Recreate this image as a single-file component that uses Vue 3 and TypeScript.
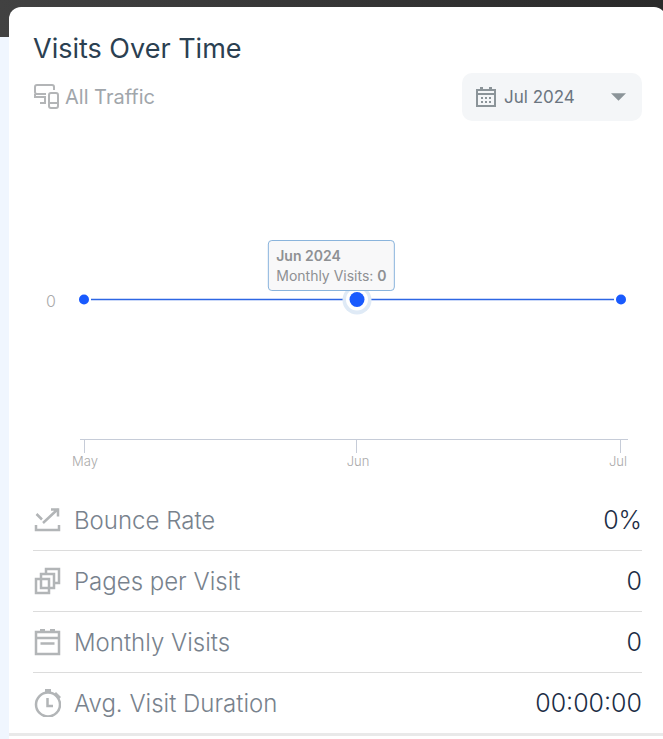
<script setup lang="ts">
import { ref } from 'vue'

interface Point {
  label: string
  tick: number
  labelX: number
}

interface Metric {
  icon: 'bounce' | 'pages' | 'calendar' | 'timer'
  label: string
  value: string
}

const month = ref('Jul 2024')
const months = ['May 2024', 'Jun 2024', 'Jul 2024']

const points: Point[] = [
  { label: 'May', tick: 51, labelX: 52 },
  { label: 'Jun', tick: 323, labelX: 325 },
  { label: 'Jul', tick: 587, labelX: 585 },
]

const metrics: Metric[] = [
  { icon: 'bounce', label: 'Bounce Rate', value: '0%' },
  { icon: 'pages', label: 'Pages per Visit', value: '0' },
  { icon: 'calendar', label: 'Monthly Visits', value: '0' },
  { icon: 'timer', label: 'Avg. Visit Duration', value: '00:00:00' },
]
</script>

<template>
  <div class="page">
    <main class="card">
      <h1 class="title">Visits Over Time</h1>
      <div class="toolbar">
        <div class="traffic">
          <svg class="traffic-icon" viewBox="0 0 26 26" aria-hidden="true">
            <path d="M21 6V3Q21 1 19 1H4Q2 1 2 3V8Q2 10 4 10H13M2 10V13H12V19M7 19H13" />
            <rect x="16" y="9" width="9" height="15" rx="2" />
            <path d="M16 19H25" />
          </svg>
          <span>All Traffic</span>
        </div>
        <div class="picker">
          <svg class="picker-icon" viewBox="0 0 20 20" aria-hidden="true">
            <path class="outline" d="M1 3H19V19H1ZM1 7H19" />
            <path class="fill" d="M4 0h3v3H4zM13 0h3v3h-3zM5 10h2v2H5zM9 10h2v2H9zM13 10h2v2h-2zM5 14h2v2H5zM9 14h2v2H9zM13 14h2v2h-2z" />
          </svg>
          <select v-model="month" class="picker-select" aria-label="Month">
            <option v-for="m in months" :key="m">{{ m }}</option>
          </select>
          <svg class="picker-caret" viewBox="0 0 16 8" aria-hidden="true"><path d="M0 0H16L8 8Z" /></svg>
        </div>
      </div>

      <section class="chart" aria-label="Monthly visits chart">
        <svg class="plot" viewBox="0 0 609 369">
          <text class="y-label" x="18" y="186" text-anchor="middle">0</text>
          <path class="axis" d="M47 318.5H595" />
          <g v-for="p in points" :key="p.label">
            <path class="tick" :d="`M${p.tick + 0.5} 319V332`" />
            <text class="x-label" :x="p.labelX" y="345" text-anchor="middle">{{ p.label }}</text>
          </g>
          <path class="series" d="M58 178.5H581" />
          <circle class="dot" cx="51" cy="178.5" r="5" />
          <circle class="dot" cx="588" cy="178.5" r="5" />
          <circle class="halo" cx="324" cy="179" r="14.5" />
          <circle class="ring" cx="324" cy="178.5" r="11" />
          <circle class="dot" cx="324" cy="178.5" r="7.5" />
        </svg>
        <div class="tooltip" role="tooltip">
          <strong>Jun 2024</strong>
          <span>Monthly Visits: <b>0</b></span>
        </div>
      </section>

      <dl class="metrics">
        <div v-for="m in metrics" :key="m.label" class="metric">
          <dt class="metric-name">
            <svg class="metric-icon" viewBox="0 0 28 28" aria-hidden="true">
              <template v-if="m.icon === 'bounce'">
                <path d="M3 19V24H26V19M3.500 8L9 13.500M10 17L25 3M18 3.500H25V10.500" />
              </template>
              <template v-else-if="m.icon === 'pages'">
                <path d="M3 12H16V26H3ZM8 12V7H21V21H16M13 7V2H26V16H21M8 12V21H16" />
              </template>
              <template v-else-if="m.icon === 'calendar'">
                <path d="M3 4H26V26H3ZM3 10H26M7.500 15.500H21.500" />
                <path class="solid" d="M7 1h5v3H7zM17 1h5v3h-5z" />
              </template>
              <template v-else>
                <circle cx="15" cy="15.500" r="12" />
                <path d="M14.500 9V17H20" />
                <path class="solid" d="M12 0h6v4h-6zM23 3l5 5-2 2-5-5z" />
              </template>
            </svg>
            <span>{{ m.label }}</span>
          </dt>
          <dd class="metric-value">{{ m.value }}</dd>
        </div>
      </dl>
    </main>
  </div>
</template>

<style>
body {
  margin: 0;
  background: #fff;
}
</style>

<style scoped>
.page {
  box-sizing: border-box;
  min-height: 100vh;
  padding: 7px 0 0 9px;
  overflow: hidden;
  background:
    linear-gradient(90deg, #414141, #2a2a2a) 0 0 / 100% 37px no-repeat,
    #f0f6fe;
  font-family: Inter, "Liberation Sans", sans-serif;
}

.card {
  box-sizing: border-box;
  min-height: calc(100vh - 7px);
  margin-right: -3px;
  padding: 24px 24px 0;
  border-radius: 12px 12px 0 0;
  background: #fff;
}

.title {
  margin: 0;
  color: #2b4051;
  font-size: 27px;
  font-weight: 400;
  line-height: 36px;
}

.toolbar {
  display: flex;
  align-items: center;
  justify-content: space-between;
  margin-top: 6px;
}

.traffic {
  display: flex;
  align-items: center;
  gap: 6px;
  color: #a1a6ab;
  font-size: 20px;
  line-height: 28px;
}

.traffic-icon {
  width: 26px;
  height: 26px;
  fill: none;
  stroke: #b3b5b7;
  stroke-width: 2;
}

.picker {
  display: grid;
  align-items: center;
  width: 180px;
  height: 48px;
}

.picker > * {
  grid-area: 1 / 1;
}

.picker-select {
  box-sizing: border-box;
  width: 100%;
  height: 100%;
  padding: 0 40px 0 42px;
  border: 0;
  border-radius: 10px;
  appearance: none;
  background: #f4f6f8;
  color: #6b7580;
  font: 400 17px Inter, "Liberation Sans", sans-serif;
}

.picker-icon,
.picker-caret {
  z-index: 1;
  pointer-events: none;
}

.picker-icon {
  width: 20px;
  height: 20px;
  margin-left: 14px;
}

.picker-icon .outline {
  fill: none;
  stroke: #8b9499;
  stroke-width: 2;
}

.picker-icon .fill,
.picker-caret {
  fill: #8b9499;
}

.picker-caret {
  justify-self: end;
  width: 15px;
  height: 8px;
  margin-right: 16px;
}

.chart {
  position: relative;
}

.plot {
  display: block;
  width: 100%;
}

.y-label {
  fill: #aaa;
  font-size: 16px;
  font-weight: 300;
}

.x-label {
  fill: #aaa;
  font-size: 13px;
  font-weight: 300;
}

.axis,
.tick {
  fill: none;
  stroke: #c6ccd8;
}

.series {
  stroke: #2d66e4;
  stroke-width: 1.5;
}

.dot {
  fill: #195afe;
}

.halo {
  fill: #dfeaf6;
}

.ring {
  fill: #fff;
}

.tooltip {
  position: absolute;
  bottom: 54%;
  left: 49%;
  display: flex;
  flex-direction: column;
  padding: 5px 7px 4px;
  border: 1px solid #8ab4dc;
  border-radius: 4px;
  background: #f8f8f9;
  color: #8e9093;
  font-size: 14px;
  line-height: 20px;
  white-space: nowrap;
  transform: translateX(-50%);
}

.tooltip strong,
.tooltip b {
  font-weight: 600;
}

.metrics {
  margin: 0;
}

/* The closing rule under the last row spans the whole card. */
.metric {
  display: flex;
  align-items: center;
  justify-content: space-between;
  height: 60px;
  border-bottom: 1px solid #dcdcdc;
}

.metric:last-child {
  margin: 0 -24px;
  padding: 0 24px;
  border-bottom: 3px solid #e9e9e9;
}

.metric-name {
  display: flex;
  align-items: center;
  gap: 13px;
  color: #78828d;
  font-size: 24px;
  font-weight: 300;
}

.metric-icon {
  width: 28px;
  height: 28px;
  fill: none;
  stroke: #b2b5b7;
  stroke-width: 2.5;
}

.metric-icon .solid {
  fill: #b2b5b7;
  stroke: none;
}

.metric-value {
  margin: 0;
  color: #1c2d45;
  font-size: 25px;
  font-weight: 300;
}
</style>
